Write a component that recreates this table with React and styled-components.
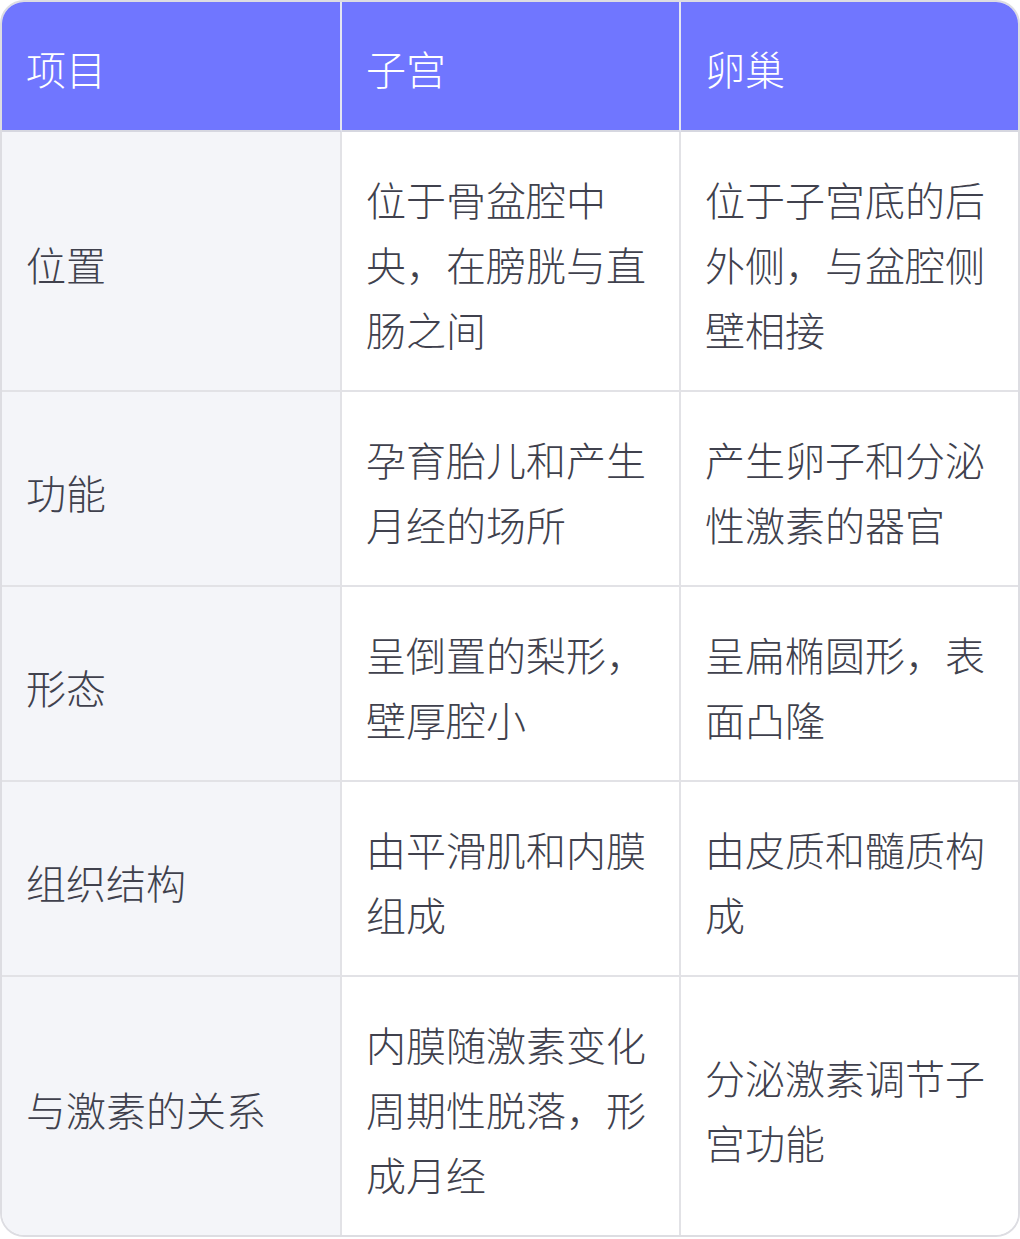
import React from "react";
import styled, { createGlobalStyle } from "styled-components";

const GlobalStyle = createGlobalStyle`
  html, body {
    margin: 0;
    padding: 0;
    background: #ffffff;
  }
  body {
    font-family: "Noto Sans CJK SC", "Noto Sans", sans-serif;
  }
`;

const columns = ["项目", "子宫", "卵巢"];

const rows = [
  ["位置", "位于骨盆腔中央，在膀胱与直肠之间", "位于子宫底的后外侧，与盆腔侧壁相接"],
  ["功能", "孕育胎儿和产生月经的场所", "产生卵子和分泌性激素的器官"],
  ["形态", "呈倒置的梨形，壁厚腔小", "呈扁椭圆形，表面凸隆"],
  ["组织结构", "由平滑肌和内膜组成", "由皮质和髓质构成"],
  ["与激素的关系", "内膜随激素变化周期性脱落，形成月经", "分泌激素调节子宫功能"],
];

const App = () => {
  return (
    <>
      <GlobalStyle />
      <Table>
        {columns.map((c, i) => (
          <HeadCell key={c} $last={i === columns.length - 1}>{c}</HeadCell>
        ))}
        {rows.map((row, r) =>
          row.map((text, i) => (
            <Cell
              key={r + "-" + i}
              $label={i === 0}
              $last={i === row.length - 1}
              $bottom={r === rows.length - 1}
            >
              {text}
            </Cell>
          ))
        )}
      </Table>
    </>
  );
};

const Table = styled.div`
  box-sizing: border-box;
  width: 1020px;
  display: grid;
  grid-template-columns: 340px 339px 337px;
  border: 2px solid #dddde2;
  border-radius: 24px;
  overflow: hidden;
`;

const HeadCell = styled.div`
  box-sizing: border-box;
  padding: 34px 28px 29px 24px;
  background: #7076ff;
  color: #ffffff;
  font-size: 40px;
  font-weight: 300;
  line-height: 65px;
  border-bottom: 2px solid #d6d7e0;
  border-right: ${(p) => (p.$last ? "none" : "2px solid #e4e5f2")};
`;

const Cell = styled.div`
  box-sizing: border-box;
  display: flex;
  align-items: center;
  padding: 35px 28px 28px 24px;
  background: ${(p) => (p.$label ? "#f4f5f9" : "#ffffff")};
  color: #40414d;
  font-size: 40px;
  font-weight: 300;
  line-height: 65px;
  border-bottom: ${(p) => (p.$bottom ? "none" : "2px solid #e2e2e6")};
  border-right: ${(p) => (p.$last ? "none" : "2px solid #e2e2e6")};
`;

export default App;
